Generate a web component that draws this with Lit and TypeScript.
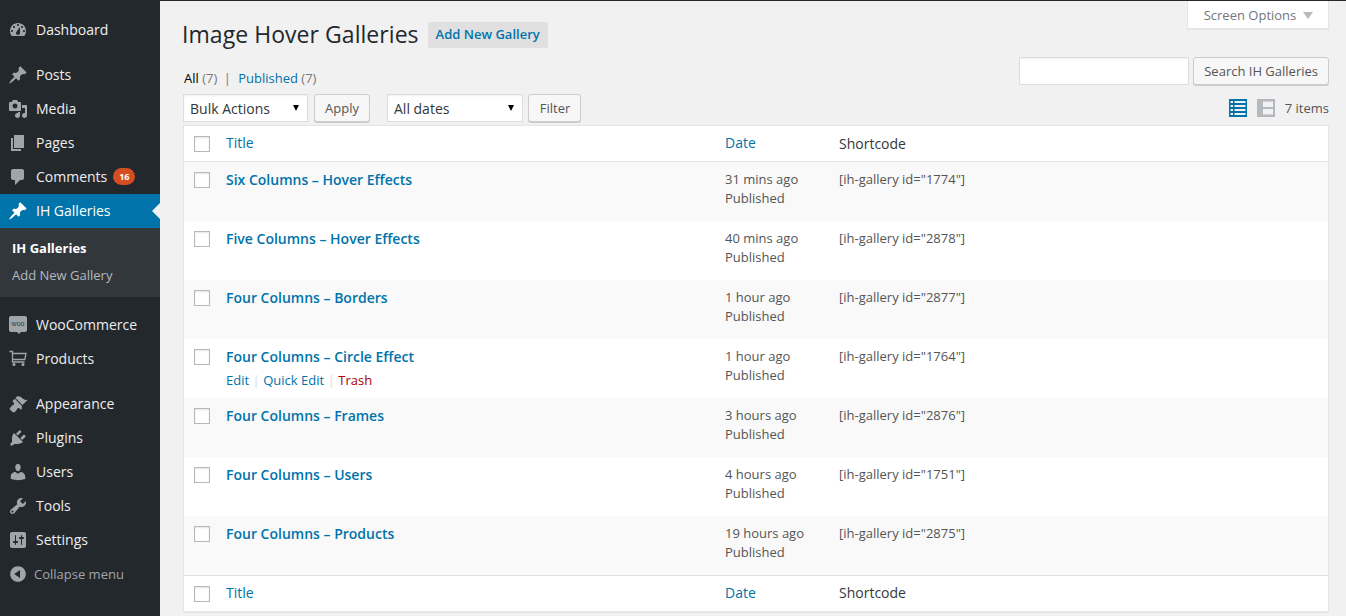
import { LitElement, html, css, svg } from "lit";
import { customElement } from "lit/decorators.js";

const ICONS: Record<string, string> = {
  dashboard: "M3.76 16h12.48c1.1-1.37 1.76-3.11 1.76-5 0-4.42-3.58-8-8-8s-8 3.58-8 8c0 1.89.66 3.63 1.76 5zM10 4c.55 0 1 .45 1 1s-.45 1-1 1-1-.45-1-1 .45-1 1-1zM6 6c.55 0 1 .45 1 1s-.45 1-1 1-1-.45-1-1 .45-1 1-1zm8 0c.55 0 1 .45 1 1s-.45 1-1 1-1-.45-1-1 .45-1 1-1zm-5.37 5.55L12 7v6c0 1.1-.9 2-2 2s-2-.9-2-2c0-.57.24-1.08.63-1.45zM4 10c.55 0 1 .45 1 1s-.45 1-1 1-1-.45-1-1 .45-1 1-1zm12 0c.55 0 1 .45 1 1s-.45 1-1 1-1-.45-1-1 .45-1 1-1z",
  post: "M10.44 3.02l1.82-1.82 6.36 6.35-1.83 1.82c-1.05-.68-2.48-.57-3.41.36l-.75.75c-.92.93-1.04 2.35-.35 3.41l-1.83 1.82-2.41-2.41-2.8 2.79c-.42.42-3.38 2.71-3.8 2.29s1.86-3.39 2.28-3.81l2.79-2.79L4.1 9.36l1.83-1.82c1.05.69 2.48.57 3.4-.36l.75-.75c.93-.92 1.05-2.35.36-3.41z",
  media: "M13 11V4c0-.55-.45-1-1-1h-1.67L9 1H5L3.67 3H2c-.55 0-1 .45-1 1v7c0 .55.45 1 1 1h10c.55 0 1-.45 1-1zM7 4.5c1.38 0 2.5 1.12 2.5 2.5S8.38 9.5 7 9.5 4.5 8.38 4.5 7 5.62 4.5 7 4.5zM14 6h5v10.5c0 1.38-1.12 2.5-2.5 2.5S14 17.88 14 16.5s1.12-2.5 2.5-2.5c.17 0 .34.02.5.05V9h-3V6zm-4 8.05V13h2v3.5c0 1.38-1.12 2.5-2.5 2.5S7 17.88 7 16.5 8.12 14 9.5 14c.17 0 .34.02.5.05z",
  page: "M6 15V2h10v13H6zm-1 1h8v2H3V5h2v11z",
  comments: "M5 2h9c1.1 0 2 .9 2 2v7c0 1.1-.9 2-2 2h-2l-5 5v-5H5c-1.1 0-2-.9-2-2V4c0-1.1.9-2 2-2z",
  appearance: "M14.48 11.06L7.41 3.99l1.5-1.5c.5-.56 2.3-.47 3.51.32 1.21.8 1.43 1.28 2.91 2.1 1.18.64 2.45 1.26 4.45.85zm-.71.71L6.7 4.7 4.93 6.47c-.39.39-.39 1.02 0 1.41l1.06 1.06c.39.39.39 1.03 0 1.42-.6.6-1.43 1.11-2.21 1.69-.35.26-.7.53-1.01.84-1.34 1.34-1.34 2.02-.6 2.76l2.4 2.4c.74.74 1.42.74 2.76-.6.31-.31.58-.65.84-1 .58-.78 1.09-1.62 1.69-2.22.39-.39 1.03-.39 1.42 0l1.06 1.06c.39.39 1.02.39 1.41 0z",
  plugins: "M13.11 4.36L9.87 7.6 8 5.73l3.24-3.24c.35-.34 1.05-.2 1.56.32.52.51.66 1.21.31 1.55zm-8 1.77l.91-1.12 9.01 9.01-1.19.84c-.71.71-2.63 1.16-3.82 1.16H6.14L4.9 17.26c-.59.59-1.54.59-2.12 0-.59-.58-.59-1.53 0-2.12l1.24-1.24v-3.88c0-1.13.4-3.19 1.09-3.89zm7.26 3.97l3.24-3.24c.34-.35 1.04-.21 1.55.31.52.51.66 1.21.31 1.55l-3.24 3.25z",
  users: "M10 9.25c-2.27 0-2.73-3.44-2.73-3.44C7 4.02 7.82 2 9.97 2c2.16 0 2.98 2.02 2.71 3.81 0 0-.41 3.44-2.68 3.44zm0 2.57L12.72 10c2.39 0 4.52 2.33 4.52 4.53v2.49s-3.65 1.13-7.24 1.13c-3.65 0-7.24-1.13-7.24-1.13v-2.49c0-2.25 1.94-4.48 4.47-4.48z",
  tools: "M16.68 9.77c-1.34 1.34-3.3 1.67-4.95.99l-5.41 6.52c-.99.99-2.59.99-3.58 0s-.99-2.59 0-3.57l6.52-5.42c-.68-1.65-.35-3.61.99-4.95 1.28-1.28 3.12-1.62 4.72-1.06l-2.89 2.89 2.82 2.82 2.86-2.87c.53 1.58.18 3.39-1.08 4.65zM3.81 16.21c.4.39 1.04.39 1.43 0 .4-.4.4-1.04 0-1.43-.39-.4-1.03-.4-1.43 0-.39.39-.39 1.03 0 1.43z",
  settings: "M18 16V4c0-1.1-.9-2-2-2H4c-1.1 0-2 .9-2 2v12c0 1.1.9 2 2 2h12c1.1 0 2-.9 2-2zM8 11h1c.55 0 1 .45 1 1s-.45 1-1 1H8v1.5c0 .28-.22.5-.5.5s-.5-.22-.5-.5V13H6c-.55 0-1-.45-1-1s.45-1 1-1h1V5.5c0-.28.22-.5.5-.5s.5.22.5.5V11zm5-2h-1c-.55 0-1-.45-1-1s.45-1 1-1h1V5.5c0-.28.22-.5.5-.5s.5.22.5.5V7h1c.55 0 1 .45 1 1s-.45 1-1 1h-1v5.5c0 .28-.22.5-.5.5s-.5-.22-.5-.5V9z",
  collapse: "M10 2.16c4.33 0 7.84 3.51 7.84 7.84s-3.51 7.84-7.84 7.84S2.16 14.33 2.16 10 5.71 2.16 10 2.16zm2 11.72V6.12L6.18 9.97z",
};

const icon = (name: string) => html`<svg class="ico" viewBox="0 0 20 20" width="20" height="20"><path fill="currentColor" d=${ICONS[name]}></path></svg>`;

const cart = html`<svg class="ico" viewBox="0 0 20 20" width="20" height="20" fill="none" stroke="currentColor" stroke-width="1.3">
  <path d="M1.5 2.5h3v10.5h12"></path><path d="M4.5 4.5h13.5l-1.2 6H4.5"></path>
  <circle cx="6" cy="15.5" r="0.9" fill="currentColor"></circle><circle cx="15" cy="15.5" r="0.9" fill="currentColor"></circle>
</svg>`;

const rows = [
  ["Six Columns – Hover Effects", "31 mins ago", "1774"],
  ["Five Columns – Hover Effects", "40 mins ago", "2878"],
  ["Four Columns – Borders", "1 hour ago", "2877"],
  ["Four Columns – Circle Effect", "1 hour ago", "1764"],
  ["Four Columns – Frames", "3 hours ago", "2876"],
  ["Four Columns – Users", "4 hours ago", "1751"],
  ["Four Columns – Products", "19 hours ago", "2875"],
];

@customElement("app-root")
export class AppRoot extends LitElement {
  static styles = css`
    :host { display: block; height: 616px; overflow: hidden; background: #f1f1f1; font-family: "Open Sans", "Noto Sans", sans-serif; font-size: 13px; color: #444; }
    * { box-sizing: border-box; }
    a { color: #0073aa; text-decoration: none; }
    .shell { display: flex; height: 616px; }

    .side { width: 160px; flex: none; background: #23282d; padding-top: 13px; }
    .item { position: relative; display: flex; align-items: center; height: 34px; padding-left: 8px; color: #eee; font-size: 14px; }
    .ico { flex: none; color: #a0a5aa; display: block; }
    .item .label { margin-left: 8px; white-space: nowrap; padding-bottom: 2px; }
    .sep { height: 11px; }
    .item.active { background: #0073aa; color: #fff; }
    .item.active .ico { color: #fff; }
    .item.active::after { content: ""; position: absolute; right: 0; top: 9px; border: 8px solid transparent; border-right-color: #f1f1f1; border-left: 0; }
    .badge { margin-left: 6px; margin-top: -1px; height: 17px; min-width: 22px; border-radius: 9px; background: #d54e21; color: #fff; font-size: 9px; font-weight: 700; display: flex; align-items: center; justify-content: center; }
    .sub { background: #32373c; height: 69px; padding: 9px 0 0 12px; font-size: 13px; color: #b4b9be; }
    .sub div { height: 27px; line-height: 23px; }
    .sub .cur { color: #fff; font-weight: 700; }
    .woo { position: relative; width: 18px; height: 16px; margin: -3px 1px 0 1px; border-radius: 2px; background: #a0a5aa; color: #32373c; font-size: 7px; font-family: "Liberation Sans", sans-serif; display: flex; align-items: center; justify-content: center; flex: none; }
    .woo::after { content: ""; position: absolute; left: 8px; top: 16px; border: 2px solid transparent; border-top-color: #a0a5aa; border-bottom: 0; }
    .collapse { color: #a0a5aa; font-size: 13px; }
    .collapse .label { margin-left: 6px; padding-bottom: 0; }

    .main { flex: 1; min-width: 0; border-top: 1px solid #23282d; padding: 0 17px 0 23px; }
    .top { display: flex; justify-content: space-between; align-items: flex-start; height: 56px; }
    .title { display: flex; align-items: center; height: 47px; margin-left: -1px; padding-top: 21px; }
    h1 { margin: 0 0 2px; font-size: 23px; font-weight: 400; color: #23282d; line-height: 29px; white-space: nowrap; letter-spacing: .05px; }
    .add { margin-left: 9px; height: 26px; line-height: 25px; padding: 0 8px; background: #e0e0e0; border-radius: 2px; font-weight: 600; font-size: 13px; white-space: nowrap; }
    .tab { width: 142px; height: 28px; background: #fff; border: 1px solid #e5e5e5; border-top: 0; box-shadow: 0 1px 1px rgba(0,0,0,.04); display: flex; align-items: center; justify-content: center; gap: 7px; color: #72777c; font-size: 13px; padding: 1px 0 0 1px; }
    .tab i { border: 5px solid transparent; border-top: 7px solid #b4b9be; border-bottom: 0; width: 0; height: 0; }

    .second { display: flex; justify-content: space-between; height: 28px; }
    .views { align-self: flex-end; margin-left: 1px; line-height: 14px; font-size: 13px; color: #777; white-space: nowrap; }
    .views b { font-weight: 400; color: #000; }
    .views .bar { color: #777; margin: 0 4px 0 3px; }
    .search { display: flex; gap: 4px; }
    .search input { width: 170px; height: 28px; border: 1px solid #ddd; background: #fff; box-shadow: inset 0 1px 2px rgba(0,0,0,.07); margin: 0; }
    .btn { height: 28px; padding: 0 10px; display: flex; align-items: center; background: #f7f7f7; border: 1px solid #ccc; border-radius: 3px; box-shadow: 0 1px 0 #ccc; color: #555; font-size: 13px; white-space: nowrap; }

    .nav { display: flex; align-items: center; height: 28px; margin-top: 9px; margin-bottom: 3px; }
    .select { position: relative; height: 28px; background: #fff; border: 1px solid #ddd; box-shadow: inset 0 1px 2px rgba(0,0,0,.07); color: #32373c; font-size: 14px; display: flex; align-items: center; padding-left: 6px; }
    .select::after { content: ""; position: absolute; right: 8px; top: 10px; border: 3.5px solid transparent; border-top: 6px solid #000; border-bottom: 0; }
    .s1 { width: 125px; } .a1 { margin-left: 6px; width: 56px; justify-content: center; padding: 0; }
    .s2 { width: 136px; margin-left: 17px; } .a2 { margin-left: 5px; width: 53px; justify-content: center; padding: 0 0 0 1px; }
    .right { margin-left: auto; display: flex; align-items: center; color: #555; }
    .right svg { display: block; margin-right: 10px; }

    .table { background: #fff; border: 1px solid #e5e5e5; box-shadow: 0 1px 1px rgba(0,0,0,.04); }
    .row { display: grid; grid-template-columns: 42px 499px 114px 1fr; height: 59px; }
    .row.alt { background: #f9f9f9; }
    .row.head { height: 36px; align-items: center; border-bottom: 1px solid #e1e1e1; font-size: 14px; }
    .row.foot { height: 36px; align-items: center; border-top: 1px solid #e1e1e1; font-size: 14px; }
    .row.head .cell:not(.sc) { padding-bottom: 2px; }
    .row.foot .cell { padding-bottom: 2px; }
    .row .sc { color: #32373c; }
    input[type="checkbox"] { appearance: none; -webkit-appearance: none; width: 16px; height: 16px; margin: 0 0 0 10px; background: #fff; border: 1px solid #b4b9be; box-shadow: inset 0 1px 2px rgba(0,0,0,.1); display: block; }
    .row .cell { padding-top: 8px; }
    .row .cbc { padding-top: 10px; }
    .row.head .cell, .row.foot .cell, .row.head .cbc, .row.foot .cbc { padding-top: 0; }
    .ttl { font-size: 14px; font-weight: 600; line-height: 19px; display: block; }
    .acts { margin-top: 5px; line-height: 19px; color: #ddd; font-size: 13px; white-space: nowrap; }
    .acts .sepb { margin: 0 3.5px; }
    .acts .trash { color: #a00; }
    .date { line-height: 19px; color: #555; padding-top: 8px; }
    .code { line-height: 19px; color: #555; font-size: 13px; }
  `;

  private menu(name: string, ic: unknown, extra: unknown = "", cls = "") {
    return html`<div class="item ${cls}">${ic}<span class="label">${name}</span>${extra}</div>`;
  }

  render() {
    return html`
      <div class="shell">
        <nav class="side">
          ${this.menu("Dashboard", icon("dashboard"))}
          <div class="sep"></div>
          ${this.menu("Posts", icon("post"))}
          ${this.menu("Media", icon("media"))}
          ${this.menu("Pages", icon("page"))}
          ${this.menu("Comments", icon("comments"), html`<span class="badge">16</span>`)}
          ${this.menu("IH Galleries", icon("post"), "", "active")}
          <div class="sub"><div class="cur">IH Galleries</div><div>Add New Gallery</div></div>
          <div class="sep"></div>
          ${this.menu("WooCommerce", html`<span class="woo">woo</span>`)}
          ${this.menu("Products", cart)}
          <div class="sep"></div>
          ${this.menu("Appearance", icon("appearance"))}
          ${this.menu("Plugins", icon("plugins"))}
          ${this.menu("Users", icon("users"))}
          ${this.menu("Tools", icon("tools"))}
          ${this.menu("Settings", icon("settings"))}
          ${this.menu("Collapse menu", icon("collapse"), "", "collapse")}
        </nav>
        <main class="main">
          <div class="top">
            <div class="title"><h1>Image Hover Galleries</h1><a class="add">Add New Gallery</a></div>
            <div class="tab">Screen Options <i></i></div>
          </div>
          <div class="second">
            <div class="views"><b>All</b> (7) <span class="bar">|</span> <a>Published</a> (7)</div>
            <div class="search"><input type="text" /><div class="btn">Search IH Galleries</div></div>
          </div>
          <div class="nav">
            <div class="select s1">Bulk Actions</div><div class="btn a1">Apply</div>
            <div class="select s2">All dates</div><div class="btn a2">Filter</div>
            <div class="right">
              <svg width="18" height="18" viewBox="0 0 18 18">
                <rect width="18" height="18" fill="#0073aa"></rect>
                ${[2, 6, 10, 14].map((y) => svg`<rect x="1.5" y=${y} width="2.5" height="2" fill="#f1f1f1"></rect><rect x="5.5" y=${y} width="11" height="2" fill="#f1f1f1"></rect>`)}
              </svg>
              <svg width="18" height="18" viewBox="0 0 18 18">
                <rect width="18" height="18" fill="#b4b9be"></rect>
                <rect x="6" y="2.5" width="10" height="5.5" fill="#f1f1f1"></rect>
                <rect x="6" y="10" width="10" height="5.5" fill="#f1f1f1"></rect>
              </svg>
              <span>7 items</span>
            </div>
          </div>
          <div class="table">
            <div class="row head">
              <div class="cbc"><input type="checkbox" /></div><div class="cell"><a>Title</a></div><div class="cell"><a>Date</a></div><div class="cell sc">Shortcode</div>
            </div>
            ${rows.map((r, i) => html`
              <div class="row ${i % 2 === 0 ? "alt" : ""}">
                <div class="cbc"><input type="checkbox" /></div>
                <div class="cell"><a class="ttl">${r[0]}</a>${i === 3 ? html`<div class="acts"><a>Edit</a><span class="sepb">|</span><a>Quick Edit</a><span class="sepb">|</span><a class="trash">Trash</a></div>` : ""}</div>
                <div class="date">${r[1]}<br />Published</div>
                <div class="code date">[ih-gallery id="${r[2]}"]</div>
              </div>`)}
            <div class="row foot">
              <div class="cbc"><input type="checkbox" /></div><div class="cell"><a>Title</a></div><div class="cell"><a>Date</a></div><div class="cell sc">Shortcode</div>
            </div>
          </div>
        </main>
      </div>
    `;
  }
}
